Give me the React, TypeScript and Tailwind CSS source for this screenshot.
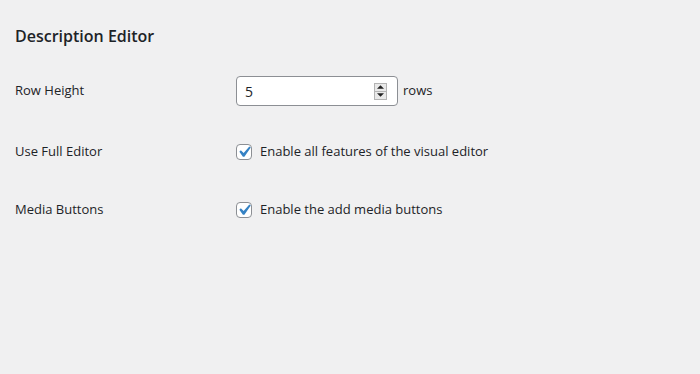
import React from 'react';

const font = { fontFamily: '"Open Sans", "Noto Sans", sans-serif' };

// Checked checkbox in the admin style
const Checkbox = () => (
  <span className="relative flex h-4 w-4 shrink-0 items-center justify-center rounded-[4px] border border-[#8c8f94] bg-white">
    <svg viewBox="0 0 20 20" className="absolute left-[-4px] top-[-4px] h-[22px] w-[22px]">
      <path d="M14.83 4.89l1.34.94-5.81 8.38H9.02L5.78 9.67l1.34-1.25 2.57 2.4z" fill="#3582c4" />
    </svg>
  </span>
);

const Spinner = () => (
  <span className="flex h-[17px] w-[13px] flex-col border border-[#b4b4b4] bg-[#e9e9e9]">
    <span className="flex flex-1 items-center justify-center border-b border-[#b4b4b4]">
      <svg viewBox="0 0 8 4" className="h-[4px] w-[7px]"><path d="M0 4L4 0l4 4z" fill="#222" /></svg>
    </span>
    <span className="flex flex-1 items-center justify-center">
      <svg viewBox="0 0 8 4" className="h-[4px] w-[7px]"><path d="M0 0l4 4 4-4z" fill="#222" /></svg>
    </span>
  </span>
);

export default function App() {
  return (
    <div className="min-h-[374px] w-full bg-[#f0f0f1] pl-[15px] pt-[25px] text-[#1d2327]" style={font}>
      <h2 className="text-[16px] font-semibold leading-[22px]">Description Editor</h2>

      <div className="mt-[29px] flex h-[30px] items-center">
        <div className="w-[221px] text-[13px]">Row Height</div>
        <div className="flex h-[30px] w-[162px] items-center rounded-[4px] border border-[#8c8f94] bg-white pl-2 pr-[10px]">
          <span className="flex-1 text-[14px]">5</span>
          <Spinner />
        </div>
        <span className="ml-[5px] text-[13px]">rows</span>
      </div>

      <div className="mt-[31px] flex h-[30px] items-center">
        <div className="w-[221px] text-[13px]">Use Full Editor</div>
        <Checkbox />
        <span className="ml-2 text-[13px]">Enable all features of the visual editor</span>
      </div>

      <div className="mt-[28px] flex h-[30px] items-center">
        <div className="w-[221px] text-[13px]">Media Buttons</div>
        <Checkbox />
        <span className="ml-2 text-[13px]">Enable the add media buttons</span>
      </div>
    </div>
  );
}
